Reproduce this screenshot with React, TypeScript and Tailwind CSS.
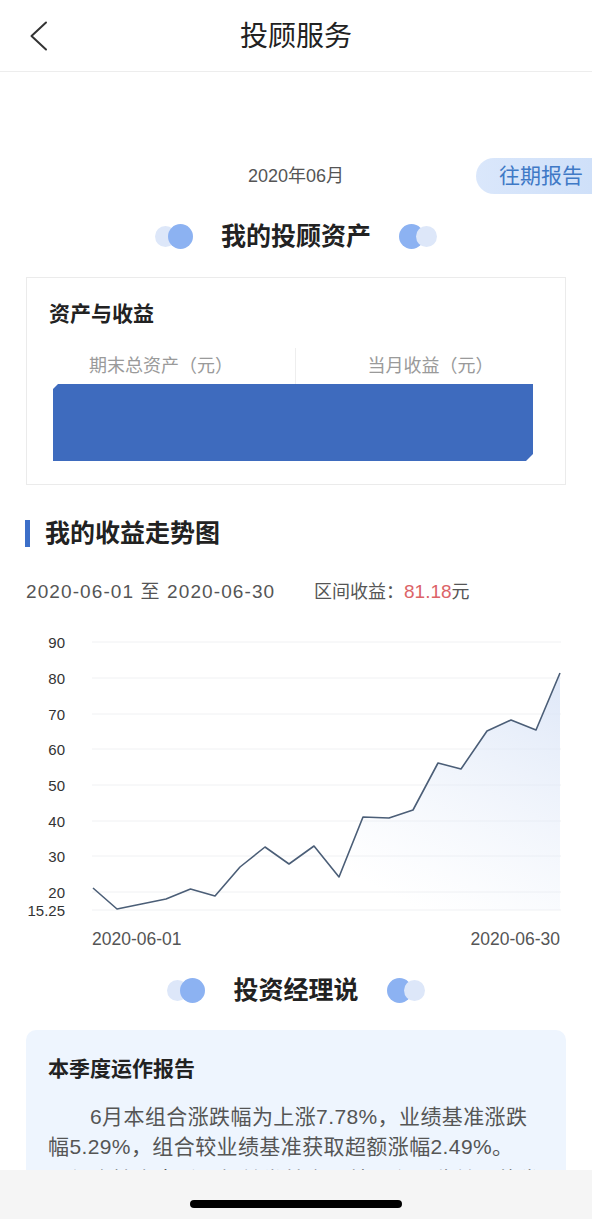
import React from 'react';

const points: [number, number][] = [
  [93, 888], [117, 909], [141.5, 904], [166, 899], [190.5, 889], [215, 896],
  [240, 867], [265, 847], [289, 864], [314, 846], [339, 877], [363, 817],
  [389, 818], [413, 810], [438, 763], [461, 769], [487, 731], [511, 720],
  [536, 730], [560, 673],
];

const grid = [
  { y: 642, label: '90' },
  { y: 678, label: '80' },
  { y: 714, label: '70' },
  { y: 749, label: '60' },
  { y: 785, label: '50' },
  { y: 821, label: '40' },
  { y: 856, label: '30' },
  { y: 892, label: '20' },
  { y: 910, label: '15.25' },
];

const Dots = ({ flip }: { flip?: boolean }) => (
  <div className={`flex items-center ${flip ? 'flex-row-reverse' : ''}`}>
    <div className="w-[21px] h-[21px] rounded-full bg-[#dde7f9]" />
    <div className={`w-[25px] h-[25px] rounded-full bg-[#8cb2f2] ${flip ? '-mr-[8px]' : '-ml-[8px]'}`} />
  </div>
);

const SectionTitle = ({ title }: { title: string }) => (
  <div className="flex items-center justify-center gap-[28px] h-[26px]">
    <Dots />
    <h2 className="text-[25px] font-bold text-[#222] leading-none">{title}</h2>
    <Dots flip />
  </div>
);

const TrendChart = () => {
  const line = points.map(([x, y]) => `${x},${y}`).join(' ');
  const area = `M93,910 L${line.replace(/ /g, ' L')} L560,910 Z`;
  return (
    <svg width="592" height="345" viewBox="0 610 592 345" className="block">
      <defs>
        <linearGradient id="area" x1="0" y1="1" x2="1" y2="0">
          <stop offset="0.35" stopColor="#e4ecf9" stopOpacity="0" />
          <stop offset="1" stopColor="#dbe5f7" stopOpacity="0.9" />
        </linearGradient>
      </defs>
      {grid.map((g) => (
        <g key={g.label}>
          <line x1="92" x2="561" y1={g.y} y2={g.y} stroke="#f0f1f3" strokeWidth="1" />
          <text
            x="65"
            y={g.y}
            textAnchor="end"
            dominantBaseline="central"
            fontSize="15"
            fill="#333"
            fontFamily="'Liberation Sans', sans-serif"
          >
            {g.label}
          </text>
        </g>
      ))}
      <path d={area} fill="url(#area)" />
      <polyline points={line} fill="none" stroke="#4b5e77" strokeWidth="1.6" strokeLinejoin="round" />
      <text x="92" y="939" dominantBaseline="central" fontSize="17.5" fill="#555" fontFamily="'Liberation Sans', sans-serif">
        2020-06-01
      </text>
      <text x="560" y="939" textAnchor="end" dominantBaseline="central" fontSize="17.5" fill="#555" fontFamily="'Liberation Sans', sans-serif">
        2020-06-30
      </text>
    </svg>
  );
};

export default function App() {
  return (
    <div className="w-[592px] h-[1219px] flex flex-col bg-white overflow-hidden font-['Liberation_Sans','Noto_Sans_CJK_SC',sans-serif]">
      <header className="h-[72px] shrink-0 flex items-center border-b border-[#ededed]">
        <div className="w-[72px] flex items-center pl-[29px]">
          <svg width="20" height="30" viewBox="0 0 20 30" fill="none">
            <polyline points="17,1.5 2.5,15 17,28.5" stroke="#333" strokeWidth="2" strokeLinecap="round" strokeLinejoin="round" />
          </svg>
        </div>
        <h1 className="flex-1 text-center text-[28px] text-[#222] leading-none pt-[2px]">投顾服务</h1>
        <div className="w-[72px]" />
      </header>

      <main className="flex-1 overflow-hidden">
        <div className="mt-[86px] grid grid-cols-[1fr_auto_1fr] items-center h-[36px]">
          <div />
          <div className="text-[18px] text-[#555]">2020年06月</div>
          <div className="flex justify-end">
            <button className="h-[36px] pl-[23px] pr-[9px] rounded-l-full bg-gradient-to-r from-[#dae7fb] to-[#cfe0f9] text-[21px] text-[#3f79c6]">
              往期报告
            </button>
          </div>
        </div>

        <div className="mt-[29px]">
          <SectionTitle title="我的投顾资产" />
        </div>

        <section className="mt-[28px] mx-[26px] border border-[#ebebeb] pt-[22px] pb-[23px]">
          <h3 className="pl-[22px] text-[21px] font-bold text-[#222] leading-[28px]">资产与收益</h3>
          <div className="mt-[20px] grid grid-cols-2 h-[36px]">
            <div className="border-r border-[#eeeeee] flex items-center justify-center text-[18px] text-[#9a9a9a]">
              期末总资产（元）
            </div>
            <div className="flex items-center justify-center text-[18px] text-[#9a9a9a]">当月收益（元）</div>
          </div>
          <div className="ml-[26px] mr-[32px] h-[77px] bg-[#3e6bbe] [clip-path:polygon(5px_0,100%_0,100%_calc(100%-7px),calc(100%-7px)_100%,0_100%,0_5px)]" />
        </section>

        <div className="mt-[35px] mx-[25px] flex items-center gap-[15px]">
          <div className="w-[5px] h-[27px] bg-[#3c6fc8]" />
          <h2 className="text-[25px] font-bold text-[#222] leading-[27px]">我的收益走势图</h2>
        </div>

        <div className="mt-[33px] px-[26px] flex items-center text-[18px] leading-[24px] text-[#555]">
          <span className="w-[288px] shrink-0 text-[19px] tracking-[1.1px]">2020-06-01 至 2020-06-30</span>
          <span>
            区间收益：<span className="text-[#dc6468] text-[19px]">81.18</span>元
          </span>
        </div>

        <div className="mt-[6px]">
          <TrendChart />
        </div>

        <div className="mt-[22px]">
          <SectionTitle title="投资经理说" />
        </div>

        <section className="mt-[27px] mx-[26px] rounded-t-[10px] bg-[#eef5fe] pt-[25px] px-[22px] pb-[20px]">
          <h3 className="text-[21px] font-bold text-[#222] leading-[28px]">本季度运作报告</h3>
          <p className="mt-[19px] text-[21px] tracking-[0.4px] leading-[30px] text-[#555] indent-[2em]">
            6月本组合涨跌幅为上涨7.78%，业绩基准涨跌幅5.29%，组合较业绩基准获取超额涨幅2.49%。
          </p>
          <p className="mt-[3px] text-[21px] tracking-[0.4px] leading-[30px] text-[#555]">
            从组合持仓来看，权益类基金贡献了主要收益，债券类基金表现平稳。
          </p>
        </section>
      </main>

      <footer className="h-[49px] shrink-0 bg-[#f5f5f5] flex justify-center pt-[30px]">
        <div className="w-[212px] h-[8px] rounded-full bg-black" />
      </footer>
    </div>
  );
}
